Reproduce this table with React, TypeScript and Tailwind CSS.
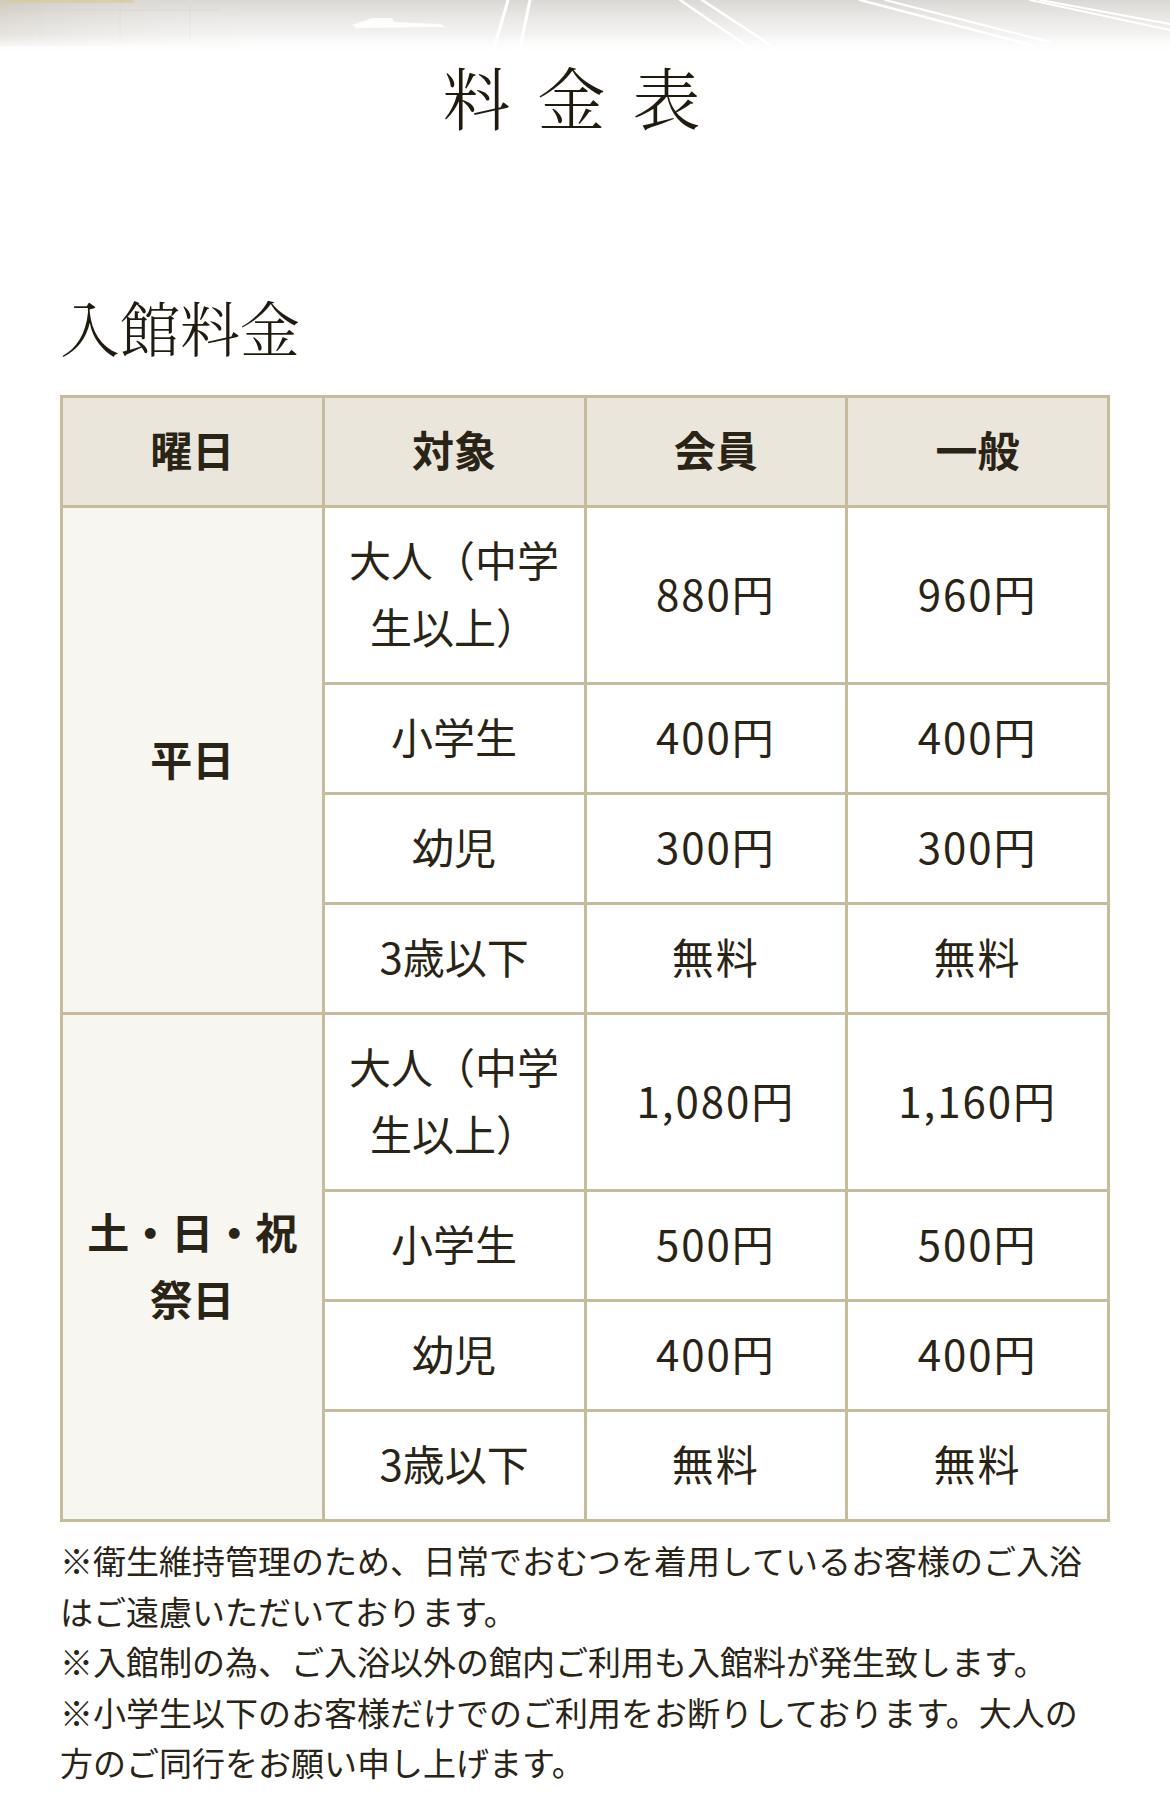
import React from "react";

type Row = { target: string; member: string; general: string };

const weekday: Row[] = [
  { target: "大人（中学生以上）", member: "880円", general: "960円" },
  { target: "小学生", member: "400円", general: "400円" },
  { target: "幼児", member: "300円", general: "300円" },
  { target: "3歳以下", member: "無料", general: "無料" },
];

const weekend: Row[] = [
  { target: "大人（中学生以上）", member: "1,080円", general: "1,160円" },
  { target: "小学生", member: "500円", general: "500円" },
  { target: "幼児", member: "400円", general: "400円" },
  { target: "3歳以下", member: "無料", general: "無料" },
];

function TopStrip() {
  return (
    <div className="h-[58px] w-full overflow-hidden">
      <svg width="1170" height="58" viewBox="0 0 1170 58" className="block">
        <defs>
          <linearGradient id="bg" x1="0" y1="0" x2="0" y2="1">
            <stop offset="0" stopColor="#dad8d4" />
            <stop offset="0.6" stopColor="#ebeae8" />
            <stop offset="1" stopColor="#ffffff" />
          </linearGradient>
          <linearGradient id="fade" x1="0" y1="0" x2="0" y2="1">
            <stop offset="0" stopColor="#ffffff" stopOpacity="0" />
            <stop offset="0.6" stopColor="#ffffff" stopOpacity="0.45" />
            <stop offset="0.9" stopColor="#ffffff" stopOpacity="1" />
            <stop offset="1" stopColor="#ffffff" stopOpacity="1" />
          </linearGradient>
          <linearGradient id="left" x1="0" y1="0" x2="1" y2="0">
            <stop offset="0" stopColor="#ccc7bd" stopOpacity="0.8" />
            <stop offset="1" stopColor="#e6e4e0" stopOpacity="0" />
          </linearGradient>
        </defs>
        <rect width="1170" height="58" fill="url(#bg)" />
        <rect width="260" height="46" fill="url(#left)" />
        <rect x="4" y="0" width="130" height="3" fill="#d9c9a0" opacity="0.7" />
        <g stroke="#cfccc6" strokeWidth="1" opacity="0.5">
          <line x1="10" y1="10" x2="220" y2="10" />
          <line x1="40" y1="5" x2="40" y2="42" />
          <line x1="120" y1="5" x2="120" y2="42" />
          <line x1="190" y1="5" x2="190" y2="42" />
        </g>
        <g stroke="#ffffff" fill="none" strokeLinecap="round">
          <line x1="508" y1="0" x2="494" y2="48" strokeWidth="3" />
          <line x1="530" y1="0" x2="520" y2="48" strokeWidth="3" />
          <line x1="680" y1="0" x2="750" y2="48" strokeWidth="2.5" />
          <line x1="702" y1="0" x2="775" y2="48" strokeWidth="2.5" />
          <line x1="860" y1="0" x2="1035" y2="46" strokeWidth="2.5" />
          <line x1="885" y1="0" x2="1050" y2="42" strokeWidth="2" />
          <line x1="1030" y1="0" x2="1170" y2="30" strokeWidth="2" />
          <line x1="1040" y1="0" x2="1170" y2="24" strokeWidth="2" />
        </g>
        <path d="M352 25 L372 18 L392 18 L394 22 L440 24 L446 27 L356 28 Z" fill="#ffffff" opacity="0.9" />
        <rect width="1170" height="58" fill="url(#fade)" />
      </svg>
    </div>
  );
}

const cell =
  "border-[3px] border-[#c6bc9c] px-[12px] pt-[17px] pb-[23px] text-center align-middle text-[42px] leading-[67px]";

function Group({ label, rows }: { label: string; rows: Row[] }) {
  return (
    <>
      {rows.map((r, i) => (
        <tr key={r.target + i}>
          {i === 0 && (
            <td rowSpan={rows.length} className={`${cell} bg-[#f8f6f1] font-bold`}>
              {label}
            </td>
          )}
          <td className={`${cell} bg-white`}>{r.target}</td>
          <td className={`${cell} bg-white tracking-[2px]`}>{r.member}</td>
          <td className={`${cell} bg-white tracking-[2px]`}>{r.general}</td>
        </tr>
      ))}
    </>
  );
}

export default function App() {
  return (
    <div className="w-[1170px] min-h-[1809px] bg-white pb-[40px] text-[#2a2416] font-['Noto_Sans_CJK_JP','Noto_Sans',sans-serif]">
      <TopStrip />
      <h1 className="pt-[4px] text-center text-[68px] leading-[68px] tracking-[27px] font-light text-[#211b0f] font-['Noto_Serif_CJK_JP','Noto_Sans_CJK_JP',serif]">
        料金表
      </h1>
      <div className="px-[60px]">
        <h2 className="mt-[166px] text-[60px] leading-[60px] font-light text-[#211b0f] font-['Noto_Serif_CJK_JP','Noto_Sans_CJK_JP',serif]">
          入館料金
        </h2>
        <table className="mt-[39px] w-full table-fixed border-collapse border-[3px] border-[#c6bc9c]">
          <thead>
            <tr>
              {["曜日", "対象", "会員", "一般"].map((h) => (
                <th key={h} className={`${cell} bg-[#ebe6dc] font-bold`}>
                  {h}
                </th>
              ))}
            </tr>
          </thead>
          <tbody>
            <Group label="平日" rows={weekday} />
            <Group label="土・日・祝祭日" rows={weekend} />
          </tbody>
        </table>
        <div className="mt-[13px] text-[33px] leading-[50.5px]">
          <p>※衛生維持管理のため、日常でおむつを着用しているお客様のご入浴はご遠慮いただいております。</p>
          <p>※入館制の為、ご入浴以外の館内ご利用も入館料が発生致します。</p>
          <p>※小学生以下のお客様だけでのご利用をお断りしております。大人の方のご同行をお願い申し上げます。</p>
        </div>
      </div>
    </div>
  );
}
